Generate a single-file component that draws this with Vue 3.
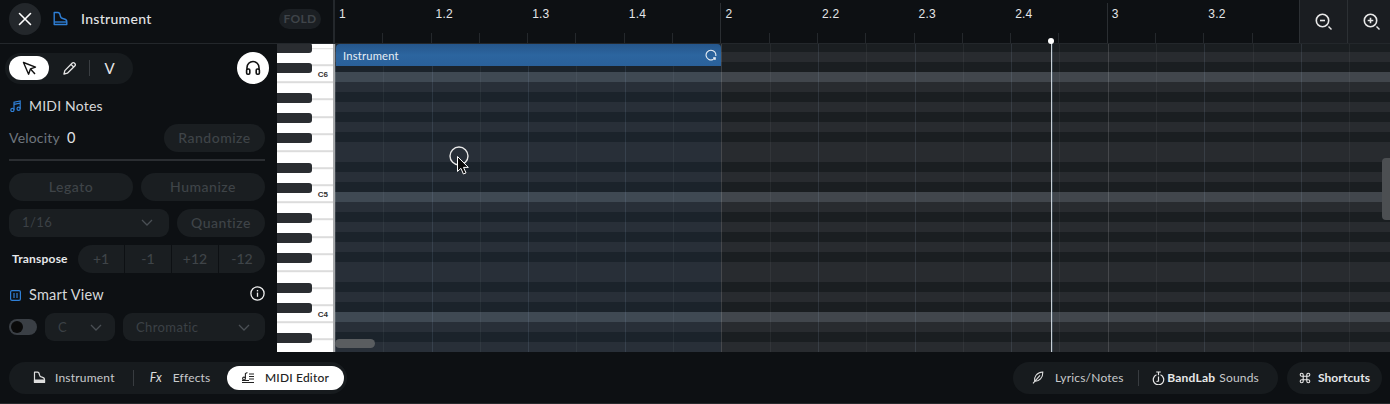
<script setup>
const rulerCells = Array.from({ length: 20 }, (_, i) => {
  const bar = Math.floor(i / 8) + 1
  const sub = i % 8
  let label = ''
  if (sub === 0) label = String(bar)
  else if (sub % 2 === 0) label = `${bar}.${sub / 2 + 1}`
  return { i, label, tall: sub === 0 }
})
const whiteRow = new Set([0, 2, 4, 5, 7, 9, 11])
const rows = Array.from({ length: 32 }, (_, i) => {
  const pitch = (((3 - i) % 12) + 12) % 12
  if (pitch === 0) return 'row c'
  return whiteRow.has(pitch) ? 'row light' : 'row dark'
})
const gridLines = Array.from({ length: 22 }, (_, i) => (i % 8 === 0 ? 'gl bar' : i % 2 === 0 ? 'gl beat' : 'gl'))
const blackTops = [-1, 19, 49, 69, 89, 119, 139, 169, 189, 209, 239, 259, 289]
const octaves = [
  { label: 'C6', top: 26 },
  { label: 'C5', top: 146 },
  { label: 'C4', top: 266 },
]
const transposes = ['+1', '-1', '+12', '-12']
</script>

<template>
  <div class="app">
    <header class="top">
      <div class="head-left">
        <button class="close">
          <svg width="14" height="14" viewBox="0 0 14 14"><path d="M1.500 1.500l11 11M12.500 1.500l-11 11" stroke="#fff" stroke-width="1.600" stroke-linecap="round" /></svg>
        </button>
        <svg class="piano-ic" width="15" height="15" viewBox="0 0 15 15" fill="none" stroke="#2f7fd6" stroke-width="1.400" stroke-linejoin="round"><path d="M1.200 1.500h3.600c1.800 0 2.200 1 2.400 3 .2 2 1.200 3 3.300 3.300 2 .3 3.300 1 3.300 3v2.700H1.200z" /><path d="M1.200 11h12.600" /></svg>
        <span class="title">Instrument</span>
        <span class="fold">FOLD</span>
      </div>
      <div class="ruler">
        <div v-for="c in rulerCells" :key="c.i" class="rcell" :class="{ tall: c.tall }">
          <span v-if="c.label" class="rlabel">{{ c.label }}</span>
        </div>
      </div>
      <div class="zooms">
        <button class="zoom-btn">
          <svg width="18" height="18" viewBox="0 0 18 18" fill="none" stroke="#e8e8e8"><circle cx="7.500" cy="7.500" r="6.200" stroke-width="1.600" /><path d="M5 7.500h5" stroke-width="1.600" /><path d="M13.500 13.500l3 3" stroke-width="1.400" /></svg>
        </button>
        <button class="zoom-btn">
          <svg width="18" height="18" viewBox="0 0 18 18" fill="none" stroke="#e8e8e8"><circle cx="7.500" cy="7.500" r="6.200" stroke-width="1.600" /><path d="M4.700 7.500h5.600M7.500 4.700v5.600" stroke-width="1.600" /><path d="M13.500 13.500l3 3" stroke-width="1.400" /></svg>
        </button>
      </div>
    </header>

    <main class="body">
      <aside class="side">
        <div class="tool-row">
          <div class="tools">
            <span class="tool active">
              <svg width="15" height="15" viewBox="0 0 15 15" fill="none" stroke="#111" stroke-width="1.400" stroke-linejoin="round"><path d="M1.500 1.500l12 4.600-5 1.700-1.900 5.400z" /><path d="M8.500 8l4.500 5" /></svg>
            </span>
            <span class="tool">
              <svg width="15" height="15" viewBox="0 0 15 15" fill="none" stroke="#e6e6e6" stroke-width="1.300" stroke-linejoin="round"><path d="M2 13l.8-3.400L10.300 2a1.400 1.400 0 0 1 2 0l.7.700a1.400 1.400 0 0 1 0 2L5.400 12.200z" /><path d="M9 3.400l2.600 2.600" /></svg>
            </span>
            <span class="tool-sep"></span>
            <span class="tool v">V</span>
          </div>
          <button class="phones">
            <svg width="16" height="16" viewBox="0 0 16 16" fill="none" stroke="#111" stroke-width="1.600"><path d="M2 10V7.500a6 6 0 0 1 12 0V10" /><rect x="1.600" y="9" width="3.200" height="5.200" rx="1.200" /><rect x="11.200" y="9" width="3.200" height="5.200" rx="1.200" /></svg>
          </button>
        </div>

        <div class="sec-title notes">
          <svg width="11" height="12" viewBox="0 0 11 12" fill="none" stroke="#2f7fd6" stroke-width="1.200"><circle cx="2.400" cy="10" r="1.600" /><circle cx="8.600" cy="8.800" r="1.600" /><path d="M4 10V2.200l6.200-1.200v7.800M4 4.400l6.200-1.200" /></svg>
          <span>MIDI Notes</span>
        </div>

        <div class="vel-row">
          <span class="vel">Velocity</span>
          <span class="vel-val">0</span>
          <span class="pill rand">Randomize</span>
        </div>
        <div class="divider"></div>

        <div class="two">
          <span class="pill">Legato</span>
          <span class="pill">Humanize</span>
        </div>
        <div class="quant">
          <span class="select wide">1/16
            <svg width="12" height="7" viewBox="0 0 12 7" fill="none" stroke="#4a4f54" stroke-width="1.300"><path d="M1 1l5 5 5-5" /></svg>
          </span>
          <span class="pill q">Quantize</span>
        </div>
        <div class="transpose">
          <span class="t-label">Transpose</span>
          <div class="seg">
            <span v-for="t in transposes" :key="t" class="seg-item">{{ t }}</span>
          </div>
        </div>

        <div class="sec-title smart">
          <svg width="11" height="11" viewBox="0 0 11 11" fill="none" stroke="#2f7fd6" stroke-width="1.200"><rect x=".6" y=".6" width="9.800" height="9.800" rx="1.400" /><path d="M4 3v5M7 3v5" /></svg>
          <span>Smart View</span>
          <svg class="info" width="15" height="15" viewBox="0 0 15 15" fill="none" stroke="#eee" stroke-width="1.300"><circle cx="7.500" cy="7.500" r="6.600" /><path d="M7.500 6.600v4.200" /><path d="M7.500 4v1.400" /></svg>
        </div>
        <div class="smart-row">
          <span class="toggle"><i></i></span>
          <span class="select key">C
            <svg width="12" height="7" viewBox="0 0 12 7" fill="none" stroke="#4a4f54" stroke-width="1.300"><path d="M1 1l5 5 5-5" /></svg>
          </span>
          <span class="select scale">Chromatic
            <svg width="12" height="7" viewBox="0 0 12 7" fill="none" stroke="#4a4f54" stroke-width="1.300"><path d="M1 1l5 5 5-5" /></svg>
          </span>
        </div>
      </aside>

      <div class="piano">
        <span v-for="t in blackTops" :key="t" class="bk" :style="{ top: t + 'px' }"></span>
        <span v-for="o in octaves" :key="o.label" class="oct" :style="{ top: o.top + 'px' }">{{ o.label }}</span>
      </div>

      <section class="grid">
        <div class="rows">
          <div v-for="(r, i) in rows" :key="i" :class="r"></div>
        </div>
        <div class="lines">
          <span v-for="(g, i) in gridLines" :key="i" :class="g"></span>
        </div>
        <div class="loop"></div>
        <div class="clip">
          <span class="clip-name">Instrument</span>
          <svg width="12" height="12" viewBox="0 0 12 12" fill="none" stroke="#e8eef5" stroke-width="1.100"><path d="M8 10.600A4.900 4.900 0 1 1 10.800 7" /><path d="M8.200 8.200h2.600v2.600H8.200z" fill="#e8eef5" stroke="none" /></svg>
        </div>
        <div class="playhead"><i></i></div>
        <div class="vscroll"></div>
        <div class="hscroll"></div>
        <svg class="cursor" width="24" height="34" viewBox="0 0 24 34" fill="none">
          <circle cx="10" cy="10" r="9" stroke="#e8e8e8" stroke-width="1.400" fill="none" />
          <path d="M8.500 10.500v15l3.400-3.200 2.500 5.700 2.600-1.100-2.500-5.500h4.800z" fill="#0a0a0a" stroke="#fff" stroke-width="1" stroke-linejoin="round" />
        </svg>
      </section>
    </main>

    <footer class="foot">
      <nav class="tabs">
        <span class="tab inst">
          <svg width="13" height="13" viewBox="0 0 13 13" fill="none" stroke="#ddd" stroke-width="1.200" stroke-linejoin="round"><path d="M1.500 1.200h3c1.500 0 1.700.9 1.900 2.400.2 1.600 1 2.300 2.600 2.600 1.600.3 2.500.9 2.500 2.400v2.900h-10z" /><path d="M1.500 9h10V11.500H1.500z" fill="#ddd" /></svg>
          Instrument
        </span>
        <span class="tab-sep"></span>
        <span class="tab fx"><em>Fx</em>Effects</span>
        <span class="tab active">
          <svg width="14" height="13" viewBox="0 0 14 13" fill="none" stroke="#222" stroke-width="1.100"><path d="M1 11.500h12M1 9.500h7M8 3h5M8 5.500h5M8 8h5" /><circle cx="3" cy="7.500" r="1.400" /><path d="M4.400 7.500V2.500l2-1" /></svg>
          MIDI Editor
        </span>
      </nav>
      <div class="right">
        <div class="tabs rtabs">
          <span class="tab lyr">
            <svg width="12" height="13" viewBox="0 0 12 13" fill="none" stroke="#ddd" stroke-width="1.100"><path d="M1 12.300l7-8M2.600 10.500C1.800 6 4.500 1.500 10.800 1c.3 5.800-3.600 9.400-8.200 9.500z" /></svg>
            Lyrics/Notes
          </span>
          <span class="tab-sep"></span>
          <span class="tab bl">
            <svg width="13" height="14" viewBox="0 0 13 14" fill="none" stroke="#e8e8e8" stroke-width="1.200"><path d="M4.200 1h4.600M6.500 1v3.200M4.500 3.800a5.200 5.200 0 1 0 4 0" /><path d="M6.500 5.500v4.500l-2 .5" /></svg>
            <b>BandLab</b><span class="sounds">Sounds</span>
          </span>
        </div>
        <div class="shortcuts">
          <svg width="12" height="12" viewBox="0 0 12 12" fill="none" stroke="#e8e8e8" stroke-width="1.100"><path d="M4.200 4.200h3.600v3.600H4.200zM4.200 4.200H2.700a1.500 1.500 0 1 1 1.500-1.500zM7.800 4.200V2.700a1.500 1.500 0 1 1 1.500 1.500zM7.800 7.800h1.500a1.500 1.500 0 1 1-1.500 1.500zM4.200 7.800v1.500a1.500 1.500 0 1 1-1.500-1.500z" /></svg>
          Shortcuts
        </div>
      </div>
    </footer>
  </div>
</template>

<style>
html, body { margin: 0; background: #0d1013; }
</style>

<style scoped>
.app {
  width: 1390px; height: 404px; overflow: hidden; display: flex; flex-direction: column;
  background: #0d1013; font-family: Lato, "Noto Sans", sans-serif; color: #ddd;
}
button { border: 0; padding: 0; font: inherit; display: flex; align-items: center; justify-content: center; }

.top { height: 44px; flex: none; display: flex; }
.head-left {
  width: 335px; flex: none; box-sizing: border-box; display: flex; align-items: center;
  padding: 0 12px 6px 9px; border-bottom: 1px solid #23272b; border-right: 2px solid #24282c;
}
.close { width: 32px; height: 32px; border-radius: 50%; background: #23272b; }
.piano-ic { margin-left: 12px; }
.title { margin-left: 13px; font-size: 14px; font-weight: 500; color: #e2e4e6; letter-spacing: .3px; }
.fold {
  margin-left: auto; width: 42px; height: 20px; border-radius: 10px; background: #1b1f23; color: #3f4449;
  font-size: 12px; font-weight: 700; display: flex; align-items: center; justify-content: center; letter-spacing: .3px;
}
.ruler { flex: 1; display: flex; overflow: hidden; border-bottom: 1px solid #23272b; }
.rcell { width: 48.3px; flex: none; position: relative; box-sizing: border-box; }
.rcell::before {
  content: ""; position: absolute; left: -1px; bottom: 0; width: 1px; height: 10px; background: #24282c;
}
.rcell.tall::before { height: 40px; background: #2a2e32; }
.rlabel {
  position: absolute; left: 4px; top: 7px; font: 12px "Liberation Sans", sans-serif; color: #e4e6e8; letter-spacing: .2px;
}
.zooms { width: 91px; flex: none; display: flex; overflow: hidden; background: #1a1d21; border-bottom: 1px solid #23272b; }
.zoom-btn { width: 48px; flex: none; height: 43px; background: none; border-left: 1px solid #2c3034; box-sizing: border-box; }

.body { height: 308px; flex: none; display: flex; }
.side { width: 277px; flex: none; box-sizing: border-box; padding: 8px 12px 0 9px; }
.tool-row { display: flex; align-items: center; justify-content: space-between; margin-left: -4px; margin-right: -4px; }
.tools {
  width: 128px; height: 31px; box-sizing: border-box; border-radius: 16px; background: #171b1e;
  display: flex; align-items: center; padding: 0 4px;
}
.tool { width: 40px; height: 24px; border-radius: 12px; display: flex; align-items: center; justify-content: center; flex: none; }
.tool.active { background: #fff; }
.tool-sep { width: 1px; height: 16px; background: #3a3e42; }
.tool.v { font-size: 15px; color: #e6e6e6; width: 39px; }
.phones { width: 32px; height: 32px; border-radius: 50%; background: #fff; }

.sec-title { display: flex; align-items: center; color: #d6d8da; letter-spacing: .2px; position: relative; }
.sec-title svg { margin-left: 1px; margin-right: 8px; }
.sec-title span { padding-bottom: 1px; }
.notes { margin-top: 12px; height: 20px; font-size: 14px; }
.vel-row { display: flex; align-items: center; height: 28px; margin-top: 8px; }
.vel { font-size: 14px; color: #6f767e; letter-spacing: .2px; padding-bottom: 2px; }
.vel-val { margin-left: 7px; font-size: 14.5px; color: #e2e4e6; padding-bottom: 2px; }
.pill {
  height: 28px; box-sizing: border-box; padding-bottom: 2px; border-radius: 14px; background: #1a1e21; color: #3f4448; font-size: 14px; font-weight: 500;
  display: flex; align-items: center; justify-content: center; flex: 1; letter-spacing: .5px;
}
.rand { margin-left: auto; width: 101px; flex: none; }
.divider { height: 2px; margin-top: 7px; background: #2b2e32; }
.two { display: flex; gap: 8px; margin-top: 12px; }
.quant { display: flex; gap: 8px; margin-top: 8px; }
.select {
  height: 28px; border-radius: 9px; background: #1a1e21; color: #3c4146; font-size: 13px; box-sizing: border-box;
  display: flex; align-items: center; justify-content: space-between; letter-spacing: .4px;
}
.select.wide { width: 160px; padding: 0 16px 2px 13px; }
.q { flex: none; width: 88px; }
.transpose { display: flex; align-items: center; margin-top: 8px; }
.t-label { width: 69px; padding: 0 0 2px 3px; box-sizing: border-box; font-size: 12px; font-weight: 700; color: #e6e8ea; letter-spacing: .2px; }
.seg { flex: 1; height: 28px; border-radius: 14px; overflow: hidden; display: flex; background: #1a1e21; }
.seg-item {
  flex: 1; display: flex; align-items: center; justify-content: center; color: #3f4448; font-size: 14px; font-weight: 500;
  border-left: 1px solid #0d1013; padding-bottom: 1px;
}
.seg-item:first-child { border-left: 0; }
.smart { margin-top: 12px; height: 20px; font-size: 14.5px; }
.info { position: absolute; right: 0; top: 1px; margin: 0 !important; }
.smart-row { display: flex; align-items: center; gap: 8px; margin-top: 8px; }
.toggle { width: 28px; height: 16px; border-radius: 8px; background: #3a3f45; display: flex; align-items: center; padding-left: 2px; box-sizing: border-box; flex: none; }
.toggle i { width: 12px; height: 12px; border-radius: 50%; background: #0a0a0a; }
.select.key { width: 70px; padding: 0 13px; flex: none; }
.select.scale { flex: 1; padding: 0 15px 0 13px; }

.piano {
  width: 58px; flex: none; position: relative; overflow: hidden; box-sizing: border-box; border-right: 2px solid #a8aaac;
  background: repeating-linear-gradient(180deg, #fff 0, #fff 15.143px, #dcdcdc 15.143px, #dcdcdc 17.143px) 0 5.2px #fff;
}
.bk { position: absolute; left: 0; width: 35px; height: 10px; background: #2a2d31; border-radius: 0 3px 3px 0; }
.oct { position: absolute; right: 5px; font-size: 8px; font-weight: 700; color: #333; line-height: 10px; font-family: "Liberation Sans", sans-serif; }

.grid { flex: 1; position: relative; background: #1a1e21; }
.rows { position: absolute; inset: 0; overflow: hidden; }
.rows > :first-child { margin-top: -2px; }
.row { height: 10px; }
.dark { background: #1a1e21; }
.light { background: #282b2f; }
.c { background: #41464c; }
.lines { position: absolute; inset: 0; display: flex; overflow: hidden; }
.gl { width: 48.3px; flex: none; box-sizing: border-box; border-left: 1px solid rgba(255, 255, 255, .05); }
.gl.beat { border-left-color: rgba(190, 215, 255, .11); }
.gl.bar { border-left-color: rgba(255, 255, 255, .14); }
.loop { position: absolute; left: 0; top: 0; bottom: 0; width: 386px; background: rgba(40, 110, 190, .07); }
.clip {
  position: absolute; left: 1px; top: 0; width: 385px; height: 22px; box-sizing: border-box; padding: 0 4px 0 7px;
  background: linear-gradient(#25568b, #2c659f 50%, #2a619b); border-radius: 4px 4px 0 0; display: flex; align-items: center; justify-content: space-between;
}
.clip-name { font-size: 11.2px; color: #e6edf5; letter-spacing: .2px; }
.playhead { position: absolute; left: 716px; top: -3px; bottom: 0; width: 1px; background: #c8d0d6; box-shadow: 1px 0 0 rgba(120, 150, 180, .25); }
.playhead i { position: absolute; left: -3px; top: -3px; width: 6px; height: 6px; border-radius: 50%; background: #fff; }
.vscroll { position: absolute; right: 0; top: 114px; width: 8px; height: 62px; border-radius: 4px 0 0 4px; background: #4c4f52; }
.hscroll { position: absolute; left: 0; bottom: 4px; width: 40px; height: 9px; border-radius: 5px; background: #5a5d60; }
.cursor { position: absolute; left: 114px; top: 102px; }

.foot { height: 52px; flex: none; box-sizing: border-box; padding: 10px 8px 9px 9px; display: flex; justify-content: space-between; border-bottom: 1px solid #26292c; }
.tabs { height: 32px; border-radius: 16px; background: #171b1e; display: flex; align-items: center; padding: 0 3px; box-sizing: border-box; width: 338px; font-size: 12px; color: #c8cacc; letter-spacing: .2px; }
.tab { display: flex; align-items: center; white-space: nowrap; padding-bottom: 1px; box-sizing: border-box; }
.tab.inst { margin-left: 21px; }
.tab.inst svg { margin-right: 9px; }
.tab-sep { width: 1px; height: 16px; background: #383c40; flex: none; }
.tabs > .tab-sep:nth-child(2) { margin-left: 18px; }
.tab.fx { margin-left: 16px; }
.tab.fx em { font-size: 12.5px; width: 11px; margin-right: 12px; color: #ddd; }
.tab.active { margin-left: 16px; width: 117px; flex: none; height: 24px; border-radius: 12px; background: #fff; color: #222; justify-content: center; gap: 10px; font-weight: 500; }
.right { display: flex; gap: 9px; }
.rtabs { width: 265px; padding: 0 19px 0 19px; justify-content: space-between; }
.tab.lyr svg { margin-right: 11px; }
.tabs.rtabs > .tab-sep:nth-child(2) { margin-left: 0; }
.tab.bl svg { margin-right: 2px; }
.tab.bl b { font-weight: 700; color: #e8e8e8; }
.sounds { margin-left: 4px; }
.shortcuts { width: 95px; height: 32px; box-sizing: border-box; padding-bottom: 1px; border-radius: 16px; background: #171b1e; display: flex; align-items: center; justify-content: center; gap: 7px; font-size: 12px; font-weight: 700; color: #e6e8ea; letter-spacing: .1px; }
</style>
